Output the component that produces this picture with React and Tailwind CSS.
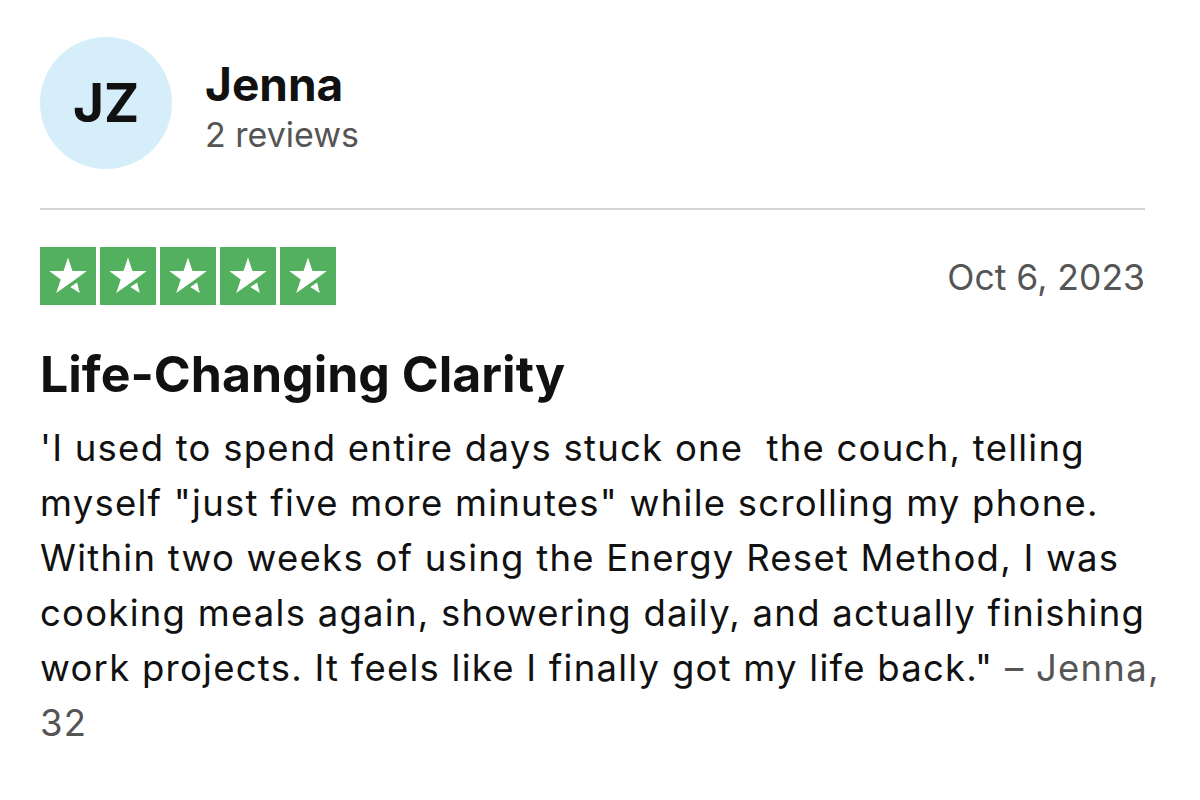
function Star() {
  return (
    <div className="w-[56px] h-[58px] bg-[#52b05e] flex items-center justify-center">
      <svg viewBox="0 0 100 100" className="w-[56px] h-[58px]">
        <polygon
          fill="#fff"
          points="50,17 58,41 83.5,41.2 63,56.3 29,80.5 37,56.3 16.5,41.2 42,41"
        />
        <polygon fill="#fff" points="66.3,61.5 71,80.5 54,69.5" />
      </svg>
    </div>
  );
}

export default function App() {
  return (
    <div
      className="w-[1200px] h-[800px] bg-white overflow-hidden pl-[40px] pr-[55px] pt-[37px]"
      style={{ fontFamily: 'Inter, "Liberation Sans", Arial, sans-serif' }}
    >
      <div className="flex items-start">
        <div className="w-[132px] h-[132px] rounded-full bg-[#d5eefa] flex items-center justify-center shrink-0">
          <span className="text-[53px] font-bold text-[#111] leading-none">JZ</span>
        </div>
        <div className="ml-[33px] mt-[24px]">
          <div className="text-[46px] font-bold text-[#111] leading-none">Jenna</div>
          <div className="text-[34px] text-[#555] leading-none mt-[11px]">2 reviews</div>
        </div>
      </div>

      <div className="mt-[39px] border-t-2 border-[#d4d4d4]" />

      <div className="mt-[37px] flex items-center justify-between">
        <div className="flex gap-[4px]">
          <Star />
          <Star />
          <Star />
          <Star />
          <Star />
        </div>
        <div className="text-[35.5px] text-[#555] leading-none pt-[4px]">Oct 6, 2023</div>
      </div>

      <h1 className="mt-[44px] text-[50px] font-bold text-[#111] leading-none">
        Life-Changing Clarity
      </h1>

      <p className="mt-[22px] text-[36.5px] tracking-[1.25px] leading-[55px] text-[#111] whitespace-nowrap">
        'I used to spend entire days stuck one{'\u00a0'} the couch, telling
        <br />
        myself "just five more minutes" while scrolling my phone.
        <br />
        Within two weeks of using the Energy Reset Method, I was
        <br />
        cooking meals again, showering daily, and actually finishing
        <br />
        work projects. It feels like I finally got my life back."{' '}
        <span className="text-[#555]">– Jenna,</span>
        <br />
        <span className="text-[#555]">32</span>
      </p>
    </div>
  );
}
